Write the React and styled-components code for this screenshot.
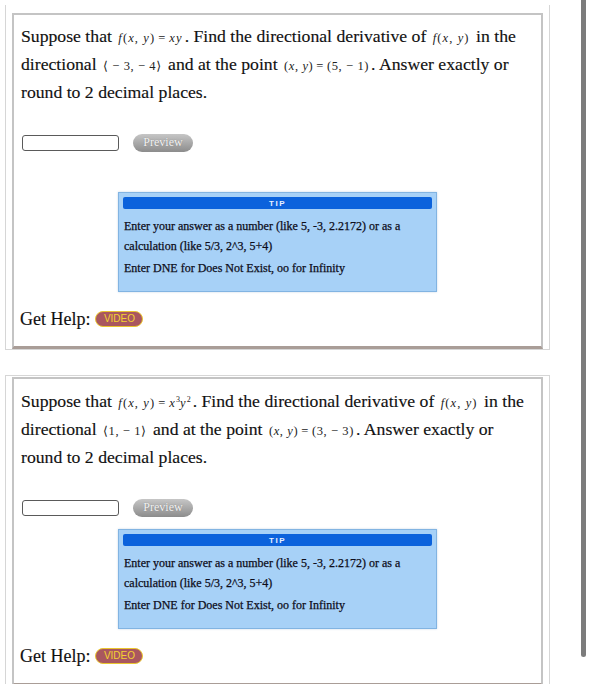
import React from "react";
import styled, { createGlobalStyle } from "styled-components";

const Global = createGlobalStyle`
  html, body { margin: 0; padding: 0; background: #fff; }
  body { font-family: "Liberation Serif", "Times New Roman", serif; color: #111; overflow: hidden; }
`;

const Page = styled.div`
  display: flex;
  flex-direction: row;
  width: 589px;
  height: 684px;
  overflow: hidden;
`;

const Column = styled.div`
  display: flex;
  flex-direction: column;
  padding: 5px 0 0 0;
  width: 550px;
  flex-shrink: 0;
`;

const TopRule = styled.div`
  height: 1px;
  width: 550px;
  background: linear-gradient(to right, #9a9a9a 0, #9a9a9a 283px, #d2d2d2 283px);
`;

const Scrollbar = styled.div`
  margin-left: auto;
  margin-right: 3px;
  width: 5px;
  height: 657px;
  background: #7c7c7c;
  border-radius: 0 0 3px 3px;
`;

const Outer = styled.div`
  margin-left: 5px;
  border: 1px solid #d6d6d6;
  border-top: ${(p) => (p.$noTop ? "none" : "1px solid #d6d6d6")};
  padding: ${(p) => p.$top}px 6px 0 6px;
  margin-top: ${(p) => p.$gap}px;
  flex-shrink: 0;
`;

const Inner = styled.div`
  border: 2px solid #c4c4c4;
  border-bottom: 3px solid #a99d97;
  padding: 8px 7px 14px 7px;
  display: flex;
  flex-direction: column;
  background: #fff;
`;

const Question = styled.div`
  font-size: 17.7px;
  line-height: 26px;
  display: flex;
  flex-direction: column;
  -webkit-text-stroke: 0.15px #111;
`;

const Line = styled.span`
  white-space: nowrap;
`;

const M = styled.span`
  font-size: 12.5px;
  letter-spacing: ${(p) => (p.$tight ? 0.6 : 1.1)}px;
  font-family: "Liberation Serif", "DejaVu Serif", serif;
  color: #222;
  margin: 0 2px;
  -webkit-text-stroke: 0;
`;

const V = styled.i`
  font-style: italic;
`;

const Eq = styled.span`
  margin: 0 3px;
`;

const Sup = styled.sup`
  font-size: 8px;
  letter-spacing: 0;
`;

const AnswerRow = styled.div`
  display: flex;
  align-items: center;
  gap: 14px;
  margin-top: ${(p) => p.$top}px;
  margin-left: 1px;
  height: 19px;
`;

const Input = styled.div`
  width: 95px;
  height: 14px;
  border: 1px solid #5a5a5a;
  border-radius: 3px;
  background: #fff;
`;

const Preview = styled.div`
  width: 60px;
  height: 18px;
  border-radius: 10px;
  background: linear-gradient(#c6c6c6, #8c8c8c);
  color: #f4f4f4;
  font-size: 12px;
  display: flex;
  align-items: center;
  justify-content: center;
  text-shadow: 0 0 1px #777;
`;

const Tip = styled.div`
  align-self: center;
  width: 309px;
  margin-top: ${(p) => p.$top}px;
  background: #a7d1f7;
  border: 1px solid #82b4e2;
  padding: 4px 4px 13px 4px;
  box-shadow: 0 0 2px rgba(120, 160, 200, 0.4);
`;

const TipHead = styled.div`
  height: 12px;
  background: #0b62dc;
  border-radius: 2px;
  color: #e8f0ff;
  font-family: "Liberation Sans", Arial, sans-serif;
  font-weight: bold;
  font-size: 8px;
  letter-spacing: 1.5px;
  display: flex;
  align-items: center;
  justify-content: center;
`;

const TipText = styled.div`
  font-size: 12px;
  line-height: 20px;
  padding: 7px 0 0 1px;
  color: #0d0d1a;
  -webkit-text-stroke: 0.25px #0d0d1a;
`;

const TipPara = styled.div`
  margin-top: ${(p) => p.$top || 0}px;
`;

const HelpRow = styled.div`
  display: flex;
  align-items: center;
  gap: 5px;
  margin-top: 14px;
  font-size: 18px;
  line-height: 26px;
  margin-left: -1px;
  -webkit-text-stroke: 0.15px #111;
`;

const Video = styled.div`
  width: 46px;
  height: 14px;
  border: 1.5px solid #e9c52e;
  border-radius: 9px;
  background: #a9575f;
  color: #f4d232;
  font-family: "Liberation Sans", Arial, sans-serif;
  font-size: 10px;
  display: flex;
  align-items: center;
  justify-content: center;
  -webkit-text-stroke: 0;
`;

function Problem({ top, gap, noTop, fn, dir, point, tipTop }) {
  return (
    <Outer $top={top} $gap={gap} $noTop={noTop}>
      <Inner>
        <Question>
          <Line>
            Suppose that{" "}
            <M>
              <V>f</V>(<V>x</V>, <V>y</V>)<Eq>=</Eq>
              {fn}
            </M>
            . Find the directional derivative of{" "}
            <M>
              <V>f</V>(<V>x</V>, <V>y</V>)
            </M>{" "}
            in the
          </Line>
          <Line>
            directional <M $tight>{dir}</M> and at the point{" "}
            <M $tight>
              (<V>x</V>, <V>y</V>)<Eq>=</Eq>
              {point}
            </M>
            . Answer exactly or
          </Line>
          <Line>round to 2 decimal places.</Line>
        </Question>
        <AnswerRow $top={28}>
          <Input />
          <Preview>Preview</Preview>
        </AnswerRow>
        <Tip $top={tipTop}>
          <TipHead>TIP</TipHead>
          <TipText>
            <TipPara>
              Enter your answer as a number (like 5, -3, 2.2172) or as a
              <br />
              calculation (like 5/3, 2^3, 5+4)
            </TipPara>
            <TipPara $top={2}>Enter DNE for Does Not Exist, oo for Infinity</TipPara>
          </TipText>
        </Tip>
        <HelpRow>
          Get Help:
          <Video>VIDEO</Video>
        </HelpRow>
      </Inner>
    </Outer>
  );
}

export default function App() {
  return (
    <>
      <Global />
      <Page>
        <Column>
          <TopRule />
          <Problem
            top={8}
            gap={0}
            noTop
            fn={
              <>
                <V>x</V>
                <V>y</V>
              </>
            }
            dir={<>⟨ − 3, − 4⟩</>}
            point={<>(5, − 1)</>}
            tipTop={40}
          />
          <Problem
            top={1}
            gap={25}
            fn={
              <>
                <V>x</V>
                <Sup>3</Sup>
                <V>y</V>
                <Sup>2</Sup>
              </>
            }
            dir={<>⟨1, − 1⟩</>}
            point={<>(3, − 3)</>}
            tipTop={12}
          />
        </Column>
        <Scrollbar />
      </Page>
    </>
  );
}
